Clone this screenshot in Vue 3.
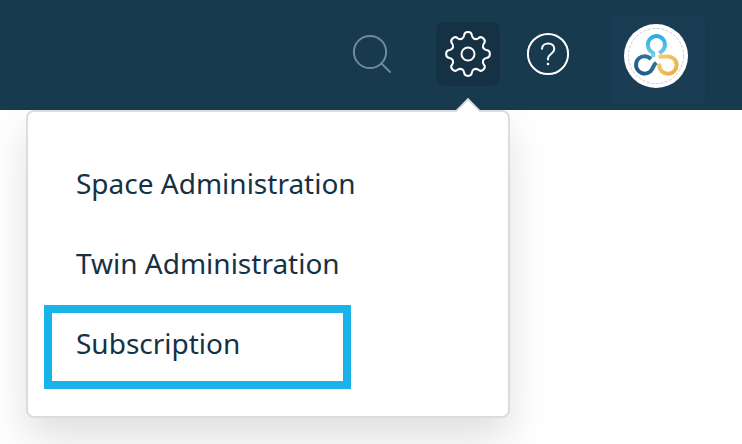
<template>
  <div class="page">
    <header class="topbar">
      <button class="icon-btn search-btn" title="Search">
        <svg width="40" height="40" viewBox="0 0 40 40">
          <circle cx="18" cy="18" r="16.1" />
          <path d="M 29.4 29.4 L 38 38" />
        </svg>
      </button>

      <button class="icon-btn settings-btn" title="Settings" @click="menuOpen = !menuOpen">
        <svg width="48" height="48" viewBox="-24 -24 48 48">
          <path v-for="n in 8" :key="n" :d="tooth" :transform="`rotate(${n * 45})`" />
          <circle r="6.5" />
        </svg>
        <span v-if="menuOpen" class="menu-arrow"></span>
      </button>

      <button class="icon-btn help-btn" title="Help">
        <svg width="44" height="44" viewBox="0 0 44 44">
          <circle cx="22" cy="22" r="20.1" />
          <path d="M 16 16.8 C 16.2 9.8 28.3 9.6 28.3 17 C 28.3 21.7 22 21.8 22 26.7 V 27.6" />
          <circle class="dot" cx="22" cy="32" r="1.3" />
        </svg>
      </button>

      <div class="avatar">
        <svg width="64" height="64" viewBox="0 0 64 64">
          <defs>
            <linearGradient id="top-lobe" x1="0" y1="0" x2="0" y2="1">
              <stop offset="0" stop-color="#28aee4" />
              <stop offset="1" stop-color="#7bcdea" />
            </linearGradient>
            <linearGradient id="left-lobe" x1="0" y1="1" x2="1" y2="0">
              <stop offset="0" stop-color="#1f5688" />
              <stop offset="1" stop-color="#327a9f" />
            </linearGradient>
            <linearGradient id="right-lobe" x1="0" y1="0" x2="1" y2="1">
              <stop offset="0" stop-color="#f1cc78" />
              <stop offset="1" stop-color="#e8b03e" />
            </linearGradient>
          </defs>
          <circle cx="32" cy="32" r="32" fill="#fff" />
          <circle class="ring" cx="32" cy="32" r="27.6" />
          <g class="lobes">
            <path stroke="url(#top-lobe)" d="M 29.2 33 V 29 C 25.6 27.4 23.9 24.4 23.9 20.6 A 8.5 8.5 0 1 1 37.6 27.4 L 35.4 29.2" />
            <path stroke="url(#left-lobe)" d="M 27 35.2 C 25.2 33.2 23 32.3 20.6 32.3 A 8.6 8.6 0 1 0 28.2 45 L 30.6 40.3 L 32.4 38.8" />
            <path stroke="url(#right-lobe)" d="M 34.8 33.6 L 37 32.4 H 43.6 A 8.7 8.7 0 1 1 35.2 41.5 V 39.4" />
          </g>
        </svg>
      </div>
    </header>

    <nav v-if="menuOpen" class="menu">
      <a
        v-for="item in items"
        :key="item"
        class="menu-item"
        :class="{ highlighted: item === selected }"
        @click="selected = item"
      >{{ item }}</a>
    </nav>
  </div>
</template>

<script setup>
import { ref } from 'vue'

const menuOpen = ref(true)
const items = ['Space Administration', 'Twin Administration', 'Subscription']
const selected = ref('Subscription')

// one gear tooth, repeated every 45 degrees
const tooth = 'M -6.3 -15.2 C -4.6 -15.9 -4.1 -16.8 -3.9 -18.5 C -3.7 -20.9 -2.2 -21.9 0 -21.9 C 2.2 -21.9 3.7 -20.9 3.9 -18.5 C 4.1 -16.8 4.6 -15.9 6.3 -15.2'
</script>

<style>
body {
  margin: 0;
  background: #fff;
}
</style>

<style scoped>
.page {
  height: 444px;
  overflow: hidden;
  font-family: 'Noto Sans', 'Open Sans', sans-serif;
}

.topbar {
  position: relative;
  z-index: 2;
  display: flex;
  justify-content: flex-end;
  align-items: flex-start;
  box-sizing: border-box;
  height: 110px;
  padding: 17px 37px 0 0;
  background: #173a4e;
}

.icon-btn {
  position: relative;
  display: flex;
  align-items: center;
  justify-content: center;
  height: 64px;
  margin: 5px 0 0;
  padding: 0;
  border: none;
  background: none;
  cursor: pointer;
}

.icon-btn svg {
  fill: none;
  stroke: #fff;
  stroke-width: 2;
  stroke-linecap: round;
}

.search-btn {
  margin-right: 44px;
}

.search-btn svg {
  stroke: #728a98;
}

.settings-btn {
  width: 64px;
  margin-right: 26px;
  border-radius: 8px;
  background: #153245;
}

.help-btn {
  margin-right: 42px;
}

.help-btn .dot {
  fill: #fff;
  stroke: none;
}

.menu-arrow {
  position: absolute;
  top: 80px;
  left: 22px;
  box-sizing: border-box;
  width: 20px;
  height: 20px;
  border: 2px solid #dcdcdc;
  border-right: none;
  border-bottom: none;
  background: #fff;
  transform: rotate(45deg);
  clip-path: polygon(0 0, 100% 0, 0 100%);
}

.avatar {
  display: flex;
  align-items: flex-start;
  box-sizing: border-box;
  width: 93px;
  height: 86px;
  padding: 7px 0 0 12px;
  background: #1a3d54;
}

.avatar .ring {
  fill: none;
  stroke: #b0b8c4;
  stroke-width: 0.7;
  stroke-dasharray: 3 1.5;
}

.avatar .lobes {
  fill: none;
  stroke-width: 4;
  stroke-linejoin: round;
}

.menu {
  position: relative;
  z-index: 1;
  display: flex;
  flex-direction: column;
  align-items: flex-start;
  box-sizing: border-box;
  width: 484px;
  height: 308px;
  margin-left: 26px;
  padding: 33px 16px 0;
  border: 2px solid #dcdcdc;
  border-radius: 8px;
  background: #fff;
  box-shadow: 0 20px 40px rgba(0, 0, 0, 0.13);
}

.menu-item {
  box-sizing: border-box;
  width: 307px;
  height: 80px;
  padding-left: 32px;
  color: #153245;
  font-size: 28px;
  line-height: 76px;
  white-space: nowrap;
  cursor: pointer;
}

.menu-item.highlighted {
  height: 84px;
  padding-left: 24px;
  border: 8px solid #19b2e9;
  line-height: 60px;
}
</style>
